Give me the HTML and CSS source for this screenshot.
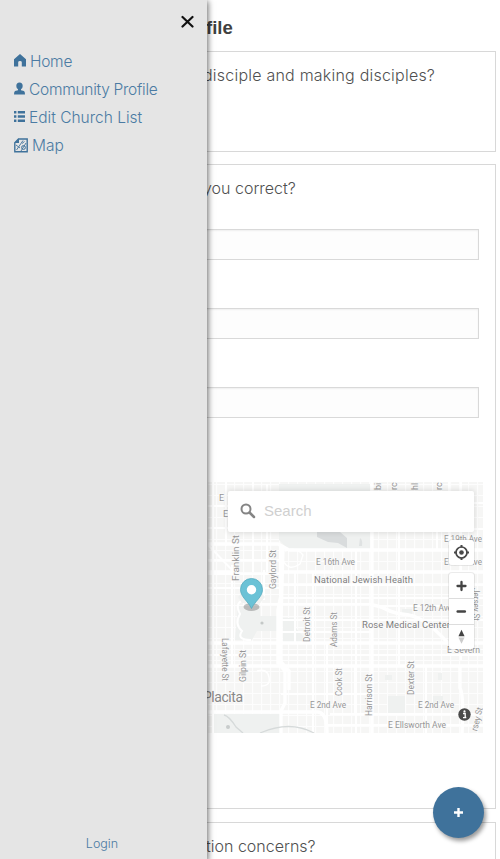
FILE: index.html
```html
<!DOCTYPE html>
<html lang="en">
<head>
<meta charset="utf-8">
<title>Community Profile</title>
<link rel="stylesheet" href="styles.css">
</head>
<body>
<main class="page">
  <h1 class="title"><span class="fit-title">file</span></h1>
  <section class="panel panel-first"><p class="question"><span class="q1">disciple and making disciples?</span></p></section>
  <section class="panel panel-main">
    <p class="question"><span class="q2">you correct?</span></p>
    <div class="fields"><div class="field"></div><div class="field"></div><div class="field"></div></div>
    <div class="map">
      <svg class="map-art" viewBox="200 482 283 251" width="283" height="251">
        <defs>
          <pattern id="blocks" width="9" height="11" patternUnits="userSpaceOnUse"><path d="M0 .5H9M.5 0V11" stroke="#fdfdfd" stroke-width="1.2"/></pattern>
        </defs>
        <rect x="200" y="482" width="283" height="251" fill="#f6f6f5"/>
        <rect x="200" y="482" width="283" height="251" fill="url(#blocks)"/>
        <g fill="#eff1f0">
          <path d="M279 484H370V549H288L279 540Z"/>
          <path d="M238 606H260V616H277V631H257L252 640H235Z"/><path d="M283 618H295V627L308 642H283Z"/>
          <path d="M213 714H280V733H213Z"/><path d="M388 696H405V713H388ZM433 696H443V703H433ZM385 675H392V680H385ZM438 673H442V680H438ZM402 609H412V615H402Z"/>
        </g>
        <path d="M317 532H340L347 538V548L338 543L328 542L317 537Z" fill="#d9dcdd"/>
        <path d="M360 538q3 2 2 8h-3Z" fill="#dfe2e2"/>
        <g fill="none" stroke="#fff" stroke-width="2">
          <path d="M213 482V733M226 482V546M253 482V572M267 484V572M399 528V666M437 530V550M461 482V660M449 482V545M313 572V733M327 643V733M356 550V733M295 572V643M232 565V665M264 570V600M355 666V714M426 666V733"/>
          <path d="M200 506H279M200 528H279M372 503H483M372 529H483M200 560H279M200 574H279M200 588H279M281 585H483M281 598H483M260 604H372M372 606H440M200 655H483M281 694H372M330 714H483M325 725H483M281 620H483M281 632H372"/>
          <path d="M207 544L236 574M248 600q-15 0-8 14q-6 10 2 17q-6 9 9 9"/>
        </g>
        <g fill="none" stroke="#fff" stroke-width="3.4">
          <path d="M372 482V733M200 544H278L289 550H483M200 572H232M281 572H483M200 643H483M200 666H483"/>
          <path d="M281 547V595L278 610V663L285 671V703L281 711V733M283 547L281 620V662L289 671V690"/>
          <path d="M200 712H318Q327 713 327 733"/>
          <path d="M372 605C385 606 388 613 402 614S428 621 447 642M460 666V688q4 7 2 45"/>
        </g>
        <path d="M285 551q11-5 18 4l-3 9q-12 8-17-4M257 671q10-3 12 6t-8 9" fill="none" stroke="#fff" stroke-width="1.4"/>
        <path d="M224 715Q229 716 236 727L243 733M260 733Q290 720 314 733" fill="none" stroke="#d6dada" stroke-width="1.3"/>
        <circle cx="262" cy="623" r="1.6" fill="#c4c8c7"/><circle cx="228" cy="727" r="2" fill="#c8cccc"/>
        <path d="M238 597L251 582L265 597L260 603H242Z" fill="#f0f2f1"/>
        <g class="road-name">
          <text x="219" y="501">E</text><text x="223" y="517">E</text>
          <text x="316" y="565" textLength="39" lengthAdjust="spacingAndGlyphs">E 16th Ave</text>
          <text x="413" y="611" textLength="39" lengthAdjust="spacingAndGlyphs">E 12th Ave</text>
          <text x="444" y="542" textLength="38" lengthAdjust="spacingAndGlyphs">E 19th Ave</text>
          <text x="444" y="565" textLength="38" lengthAdjust="spacingAndGlyphs">E 16th Ave</text>
          <text x="447" y="653" textLength="33" lengthAdjust="spacingAndGlyphs">E Severn</text>
          <text x="310" y="708" textLength="36" lengthAdjust="spacingAndGlyphs">E 2nd Ave</text>
          <text x="418" y="708" textLength="36" lengthAdjust="spacingAndGlyphs">E 2nd Ave</text>
          <text x="388" y="728" textLength="58" lengthAdjust="spacingAndGlyphs">E Ellsworth Ave</text>
          <text transform="translate(239 581)rotate(-90)" textLength="46" lengthAdjust="spacingAndGlyphs">Franklin St</text>
          <text transform="translate(276 589)rotate(-90)" textLength="39" lengthAdjust="spacingAndGlyphs">Gaylord St</text>
          <text transform="translate(310 642)rotate(-90)" textLength="35" lengthAdjust="spacingAndGlyphs">Detroit St</text>
          <text transform="translate(337 647)rotate(-90)" textLength="35" lengthAdjust="spacingAndGlyphs">Adams St</text>
          <text transform="translate(246 682)rotate(-90)" textLength="32" lengthAdjust="spacingAndGlyphs">Gilpin St</text>
          <text transform="translate(342 696)rotate(-90)" textLength="28" lengthAdjust="spacingAndGlyphs">Cook St</text>
          <text transform="translate(371.5 716)rotate(-90)" textLength="42" lengthAdjust="spacingAndGlyphs">Harrison St</text>
          <text transform="translate(413.5 695)rotate(-90)" textLength="34" lengthAdjust="spacingAndGlyphs">Dexter St</text>
          <text transform="translate(222 638)rotate(90)" textLength="43" lengthAdjust="spacingAndGlyphs">Lafayette St</text>
          <text transform="translate(473 588)rotate(90)" textLength="33" lengthAdjust="spacingAndGlyphs">Jersey St</text>
          <text transform="translate(477 731.500)rotate(-76)" textLength="24" lengthAdjust="spacingAndGlyphs">rsey St</text>
          <text transform="translate(381 490)rotate(-90)">bi</text>
          <text transform="translate(397 490)rotate(-90)">rc</text>
          <text transform="translate(418 490)rotate(-90)">hl</text>
          <text transform="translate(442 490)rotate(-90)">rc</text>
        </g>
        <g class="place-name">
          <text x="314" y="582.500" textLength="99">National Jewish Health</text>
          <text x="362" y="628" textLength="88">Rose Medical Center</text>
          <text class="district" x="203" y="701.500" textLength="40">Placita</text>
        </g>
        <ellipse cx="251.500" cy="607" rx="8" ry="4" fill="#777" opacity=".45"/>
        <path d="M251.500 608.500C248 601 240.500 597 240.500 589.500A11 11 0 0 1 262.500 589.500C262.500 597 255 601 251.500 608.500Z" fill="#6bc2d6" stroke="#57acbf" stroke-width=".8"/>
        <circle cx="251.500" cy="589.800" r="4.700" fill="#fff"/>
      </svg>
      <div class="search">
        <svg width="16" height="16" viewBox="0 0 16 16"><circle cx="6" cy="6" r="4.500" fill="none" stroke="#858585" stroke-width="2"/><path d="M9.500 9.500L14 14" stroke="#858585" stroke-width="2.500" stroke-linecap="round"/></svg>
        <span>Search</span>
      </div>
      <div class="controls">
        <div class="group"><svg width="25" height="25" viewBox="0 0 25 25"><circle cx="12.500" cy="12.500" r="5.500" fill="none" stroke="#484848" stroke-width="1.700"/><circle cx="12.500" cy="12.500" r="2.300" fill="#484848"/><path d="M12.500 5v2.500M12.500 17.500V20M5 12.500h2.500M17.500 12.500H20" stroke="#484848" stroke-width="2"/></svg></div>
        <div class="group">
          <svg width="25" height="25" viewBox="0 0 25 25"><path d="M8.500 13h8M12.500 9v8" stroke="#444" stroke-width="2.300" stroke-linecap="round"/></svg>
          <svg width="25" height="26" viewBox="0 0 25 26"><path d="M8.500 13h7.500" stroke="#444" stroke-width="2.500" stroke-linecap="round"/></svg>
          <svg width="25" height="25" viewBox="0 0 25 25"><path d="M9.300 11.800L12.500 5L15.700 11.800Z" fill="#444"/><path d="M9.300 13L12.500 19.500L15.700 13Z" fill="#ccc"/></svg>
        </div>
      </div>
      <svg class="info" width="13" height="13" viewBox="0 0 13 13"><circle cx="6.500" cy="6.500" r="6.200" fill="#4a4a4a"/><circle cx="6.500" cy="3.400" r="1.100" fill="#fff"/><path d="M5 5.500h2.200v4H8.200M5 9.700h3.300" fill="none" stroke="#fff" stroke-width="1.300"/></svg>
    </div>
  </section>
  <section class="panel panel-last"><p class="question"><span class="q3">tion concerns?</span></p></section>
</main>
<nav class="drawer">
  <button class="close" aria-label="Close"><svg width="14" height="14" viewBox="0 0 14 14"><path d="M2.500 2L12.500 11.500M12.500 2L2.500 11.500" stroke="#111" stroke-width="2.200" stroke-linecap="round"/></svg></button>
  <ul class="menu">
    <li><svg width="12" height="14" viewBox="0 0 12 14"><path d="M0 5.300L6 0L12 5.300V12.500H7.800V8.200Q7.800 7 6 7T4.200 8.200V12.500H0Z"/></svg><span class="m1">Home</span></li>
    <li><svg width="11" height="14" viewBox="0 0 11 14"><path d="M5.500 .5Q8.700 .5 8.700 4Q8.700 6.500 7 7.300V8.300L10 9Q11 9.500 11 12.500H0Q0 9.500 1 9L4 8.300V7.300Q2.300 6.500 2.300 4Q2.300 .5 5.500 .5Z"/></svg><span class="m2">Community Profile</span></li>
    <li><svg width="11" height="14" viewBox="0 0 11 14"><path d="M0 1h2.400v2.500H0ZM3.800 1H11v2.500H3.800ZM0 5.200h2.400v2.500H0ZM3.800 5.200H11v2.500H3.800ZM0 9.400h2.400v2.500H0ZM3.800 9.400H11v2.500H3.800Z"/></svg><span class="m3">Edit Church List</span></li>
    <li><svg width="14" height="15" viewBox="0 0 14 15"><path d="M4.500 1H13.200V13.800H.8V4.700Z" fill="none" stroke="#3f729b" stroke-width="1.400"/><path d="M.5 5L5 .5V5Z"/><path d="M2.500 12L9 2.500M2 7l4 3M8 5.500l2.500-2M7 13l5-8" fill="none" stroke="#3f729b" stroke-width=".9"/><circle cx="9.500" cy="9.500" r="1.900" fill="none" stroke="#3f729b"/></svg><span class="m4">Map</span></li>
  </ul>
  <a class="login">Login</a>
</nav>
<button class="fab" aria-label="Add"><svg width="11" height="11" viewBox="0 0 11 11"><path d="M1 5.500h9M5.500 1v9" stroke="#fff" stroke-width="2.400"/></svg></button>
</body>
</html>
```
FILE: styles.css
```css
* { box-sizing: border-box; }
html, body { height: 859px; overflow: hidden; }
body { margin: 0; position: relative; background: #fff; font-family: Inter, "Liberation Sans", sans-serif; font-weight: 300; color: #444; }
h1, p, ul { margin: 0; padding: 0; }
button { border: 0; padding: 0; background: none; }
svg { display: block; flex: none; }
.page { width: 496px; }
.title { height: 51px; padding: 17px 0 0 206px; font: bold 18.5px/22px "Liberation Sans", sans-serif; color: #404040; }
.panel { border: 1px solid #d8d8d8; }
.panel-first { height: 101px; }
.panel-main { height: 645px; margin-top: 12px; }
.panel-last { height: 60px; margin-top: 13px; }
.question { height: 64px; padding: 11px 0 0 202px; font-size: 16px; line-height: 24px; white-space: nowrap; color: #505050; }
.q1 { letter-spacing: .22px; }
.panel-last .question { padding-left: 205px; }
.fields { display: flex; flex-direction: column; gap: 48px; padding: 0 16px 0 15px; }
.field { height: 31px; background: #fdfdfd; border: 1px solid #d9d9d9; box-shadow: inset 0 1px 2px rgba(0,0,0,.06); }
.map { position: relative; width: 283px; height: 251px; margin: 64px 0 0 199px; overflow: hidden; }
.road-name, .place-name { font-family: Roboto, sans-serif; font-size: 9px; font-weight: 400; fill: #969696; stroke: #fafafa; stroke-width: 1.5px; paint-order: stroke; }
.place-name { font-size: 9.500px; fill: #7e7e7e; }
.place-name .district { font-size: 14px; fill: #888; }
.search { position: absolute; left: 28px; top: 9px; width: 246px; height: 41px; display: flex; align-items: center; gap: 8px; padding: 0 0 2px 12px; border-radius: 2px; background: #fff; box-shadow: 0 0 5px 1px rgba(0,0,0,.1); font: 15px "Liberation Sans", sans-serif; color: #d0d0d0; }
.controls { position: absolute; left: 249px; top: 58px; width: 25px; display: flex; flex-direction: column; gap: 8px; }
.group { background: #fff; border-radius: 3px; box-shadow: 0 0 0 1px rgba(0,0,0,.08); }
.group svg + svg { border-top: 1px solid #ddd; }
.info { position: absolute; left: 258px; top: 226px; }
.drawer { position: absolute; left: 0; top: 0; width: 207px; height: 859px; display: flex; flex-direction: column; background: #e5e5e5; box-shadow: 0 2px 6px 1px rgba(0,0,0,.6); }
.close { align-self: flex-end; margin: 15px 13px 0 0; width: 14px; height: 14px; }
.menu { list-style: none; margin: 18px 0 0 14px; color: #4b7ba3; font-size: 15.500px; }
.menu li { display: flex; align-items: center; height: 28.2px; gap: 4px; white-space: nowrap; }
.menu svg { fill: #3f729b; }
.m1, .m2 { letter-spacing: -.27px; }
.login { margin: auto 0 6px; padding-right: 3px; text-align: center; font-size: 12.500px; line-height: 18px; color: #4b7ba3; }
.fab { position: absolute; left: 433px; top: 787px; width: 51px; height: 51px; display: flex; align-items: center; justify-content: center; border-radius: 50%; background: #3f729b; box-shadow: 2px 3px 4px rgba(0,0,0,.4); }
```
